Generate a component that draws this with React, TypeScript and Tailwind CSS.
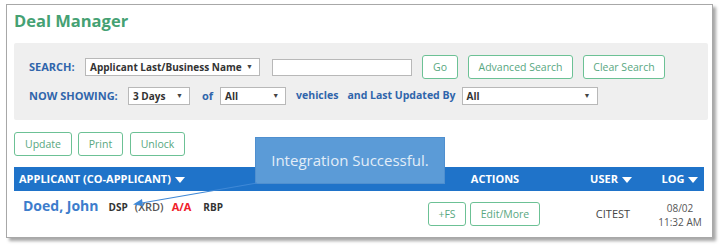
import React from "react";

const font = { fontFamily: '"Open Sans", "Noto Sans", sans-serif' };

const Caret: React.FC = () => (
  <svg width="10" height="6" viewBox="0 0 10 6" className="ml-[4px] inline-block align-middle">
    <polygon points="0,0 10,0 5,6" fill="#fff" />
  </svg>
);

const GreenButton: React.FC<{ label: string; className?: string }> = ({ label, className }) => (
  <button
    className={
      "h-[24px] whitespace-nowrap rounded-[3px] border-[1.5px] border-[#6cc195] bg-white text-[10.5px] leading-none text-[#58a77f] " +
      (className || "")
    }
  >
    {label}
  </button>
);

const FakeSelect: React.FC<{ label: string; className?: string }> = ({ label, className }) => (
  <div
    className={
      "flex h-[18px] items-center justify-between whitespace-nowrap border border-[#b8b8b8] bg-white pl-[4px] pr-[6px] text-[10px] font-bold text-[#333] " +
      (className || "")
    }
  >
    <span>{label}</span>
    <span className="text-[7px] text-[#444]">▼</span>
  </div>
);

const App: React.FC = () => {
  return (
    <div className="relative h-[246px] w-[722px] bg-white pl-[6px] pt-[4px]" style={font}>
      <div className="h-[234px] w-[707px] border border-[#a8a8a8] px-[7px] pt-[4px] shadow-[3px_3px_3px_rgba(0,0,0,0.35)]">
        <h1 className="text-[16.5px] font-bold leading-[24px] text-[#45a173]">Deal Manager</h1>

        <div className="mt-[10px] h-[77px] w-[694px] rounded-[2px] bg-[#efefef] pl-[15px] pt-[12px]">
          <div className="flex h-[24px] items-center">
            <span className="w-[56px] text-[11px] font-bold text-[#2f65ab]">SEARCH:</span>
            <FakeSelect label="Applicant Last/Business Name" className="w-[175px]" />
            <div className="ml-[12px] h-[17px] w-[140px] border border-[#b8b8b8] bg-white" />
            <GreenButton label="Go" className="ml-[10px] w-[36px]" />
            <GreenButton label="Advanced Search" className="ml-[10px] w-[105px]" />
            <GreenButton label="Clear Search" className="ml-[10px] w-[82px]" />
          </div>
          <div className="mt-[7px] flex h-[20px] items-center">
            <span className="w-[99px] text-[11px] font-bold text-[#2f65ab]">NOW SHOWING:</span>
            <FakeSelect label="3 Days" className="w-[62px]" />
            <span className="ml-[12px] text-[11px] font-bold text-[#2f65ab]">of</span>
            <FakeSelect label="All" className="ml-[7px] w-[66px]" />
            <span className="ml-[10px] text-[10.5px] font-bold text-[#2f65ab]">vehicles</span>
            <span className="ml-[9px] text-[10.5px] font-bold text-[#2f65ab]">and Last Updated By</span>
            <FakeSelect label="All" className="ml-[6px] w-[136px]" />
          </div>
        </div>

        <div className="mt-[12px] flex gap-[6px]">
          <GreenButton label="Update" className="w-[58px]" />
          <GreenButton label="Print" className="w-[45px]" />
          <GreenButton label="Unlock" className="ml-[1px] w-[55px]" />
        </div>

        <div className="mt-[11px] grid h-[24px] w-[690px] grid-cols-[406px_150px_86px_48px] items-center bg-[#1f73c9] text-[11px] font-bold text-white">
          <span className="pl-[5px]">
            APPLICANT (CO-APPLICANT)
            <Caret />
          </span>
          <span className="text-center">ACTIONS</span>
          <span className="pr-[4px] text-center">
            USER
            <Caret />
          </span>
          <span className="whitespace-nowrap text-center">
            LOG
            <Caret />
          </span>
        </div>

        <div className="grid w-[690px] grid-cols-[406px_150px_86px_48px] items-start">
          <div className="flex items-baseline pl-[9px] pt-[4px]">
            <span className="text-[14px] font-bold text-[#3d7dcc]">Doed, John</span>
            <span className="ml-[10px] text-[10px] font-bold text-[#333]">DSP</span>
            <span className="ml-[7px] text-[11px] font-semibold text-[#555]">(XRD)</span>
            <span className="ml-[8px] text-[11px] font-bold text-[#f0202a]">A/A</span>
            <span className="ml-[12px] text-[10px] font-bold text-[#333]">RBP</span>
          </div>
          <div className="flex gap-[4px] pl-[8px] pt-[11px]">
            <GreenButton label="+FS" className="w-[38px]" />
            <GreenButton label="Edit/More" className="w-[70px]" />
          </div>
          <div className="pt-[15px] text-center text-[11px] text-[#444]">CITEST</div>
          <div className="pt-[10px] text-center text-[10px] leading-[14px] text-[#555]">
            <div>08/02</div>
            <div className="whitespace-nowrap">11:32 AM</div>
          </div>
        </div>
      </div>

      <div className="absolute left-[255px] top-[137px] flex h-[47px] w-[190px] items-center justify-center border border-[#4f8fcf] bg-[#5b9bd7] text-[15px] text-[#e2edf8]">
        Integration Successful.
      </div>
      <svg className="absolute left-0 top-0" width="722" height="246" viewBox="0 0 722 246">
        <line x1="257" y1="183" x2="136" y2="204" stroke="#3f88d6" strokeWidth="1.2" />
        <polygon points="133,204.5 142,199 143,206" fill="#3f88d6" />
      </svg>
    </div>
  );
};

export default App;
